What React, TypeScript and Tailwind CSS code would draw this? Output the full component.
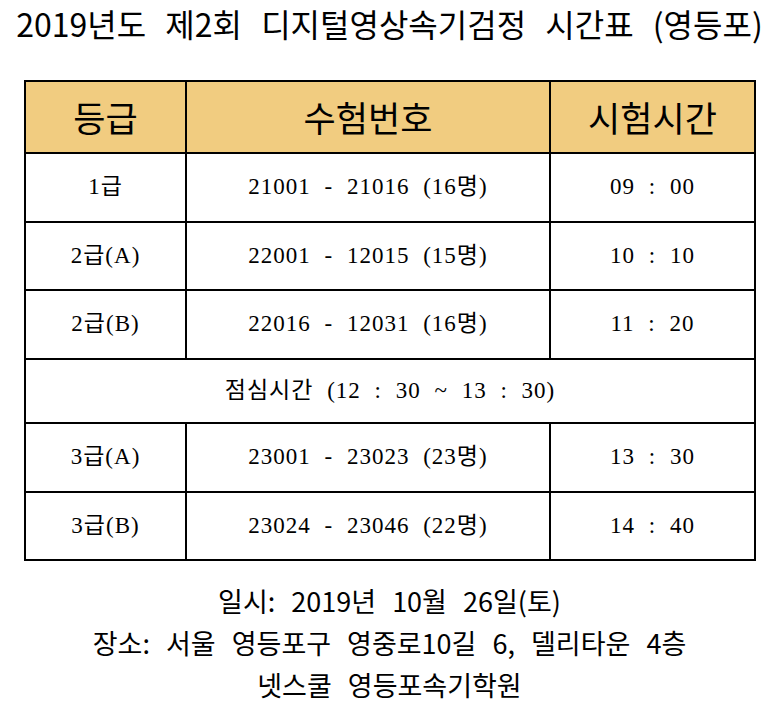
const rows = [
  { grade: "1급", range: "21001 - 21016 (16명)", time: "09 : 00", h: "h-[69px]" },
  { grade: "2급(A)", range: "22001 - 12015 (15명)", time: "10 : 10", h: "h-[68px]" },
  { grade: "2급(B)", range: "22016 - 12031 (16명)", time: "11 : 20", h: "h-[69px]" },
]

const rowsAfter = [
  { grade: "3급(A)", range: "23001 - 23023 (23명)", time: "13 : 30", h: "h-[69px]" },
  { grade: "3급(B)", range: "23024 - 23046 (22명)", time: "14 : 40", h: "h-[68px]" },
]

type Row = (typeof rows)[number]

const gothic = "font-['Noto_Sans_CJK_KR',sans-serif]"
const serif = "font-['Liberation_Serif','Noto_Sans_CJK_KR',serif]"

function BodyRow({ row }: { row: Row }) {
  return (
    <div className={`flex border-b-2 border-black ${row.h}`}>
      <div className="w-[161px] border-r-2 border-black flex items-center justify-center">
        {row.grade}
      </div>
      <div className="w-[364px] border-r-2 border-black flex items-center justify-center">
        {row.range}
      </div>
      <div className="flex-1 flex items-center justify-center">{row.time}</div>
    </div>
  )
}

export default function App() {
  return (
    <div className="w-[779px] h-[715px] bg-white text-black overflow-hidden">
      <h1
        className={`${gothic} text-center text-[32px] leading-[47px] font-normal [word-spacing:12px] whitespace-nowrap`}
      >
        2019년도 제2회 디지털영상속기검정 시간표 (영등포)
      </h1>

      <div className="mt-[33px] ml-[24px] w-[732px] border-x-2 border-t-2 border-black">
        <div className={`${gothic} flex h-[72px] border-b-2 border-black bg-[#f1cc80] text-[35px]`}>
          <div className="w-[161px] border-r-2 border-black flex items-center justify-center">등급</div>
          <div className="w-[364px] border-r-2 border-black flex items-center justify-center">수험번호</div>
          <div className="flex-1 flex items-center justify-center">시험시간</div>
        </div>

        <div className={`${serif} text-[23px] tracking-[1px] [word-spacing:7px]`}>
          {rows.map((r) => (
            <BodyRow key={r.grade} row={r} />
          ))}
          <div className="flex h-[64px] border-b-2 border-black items-center justify-center">
            점심시간 (12 : 30 ~ 13 : 30)
          </div>
          {rowsAfter.map((r) => (
            <BodyRow key={r.grade} row={r} />
          ))}
        </div>
      </div>

      <div className={`${gothic} mt-[19px] text-center text-[27px] leading-[42px] [word-spacing:10px]`}>
        <p>일시: 2019년 10월 26일(토)</p>
        <p>장소: 서울 영등포구 영중로10길 6, 델리타운 4층</p>
        <p>넷스쿨 영등포속기학원</p>
      </div>
    </div>
  )
}
